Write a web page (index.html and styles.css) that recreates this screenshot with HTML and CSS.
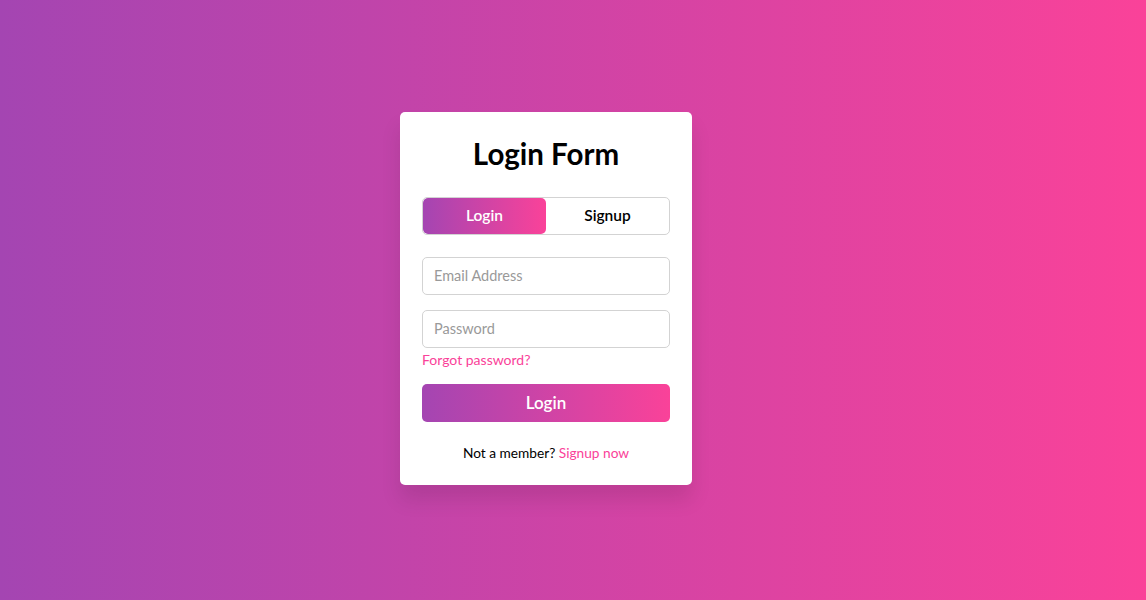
FILE: index.html
```html
<!DOCTYPE html>
<html lang="en">
<head>
    <meta charset="UTF-8">
    <meta name="viewport" content="width=device-width, initial-scale=1.0">
    <title>Login Form</title>
    <link rel="stylesheet" href="styles.css">
</head>
<body>
    <div class="wrapper">
        <h1 class="title">Login Form</h1>
        <div class="tabs">
            <button class="tab active">Login</button>
            <button class="tab">Signup</button>
        </div>
        <form class="form" onsubmit="return false">
            <input class="field" type="text" placeholder="Email Address">
            <input class="field pass" type="password" placeholder="Password">
            <a class="link forgot" href="#">Forgot password?</a>
            <button class="submit" type="submit">Login</button>
            <p class="signup">Not a member? <a class="link" href="#">Signup now</a></p>
        </form>
    </div>
</body>
</html>
```

FILE: styles.css
```css
* { margin: 0; padding: 0; box-sizing: border-box; }
html, body { height: 100%; }
body {
    font-family: "Lato", "Open Sans", sans-serif;
    background: linear-gradient(to right, #a445b2, #fa4299);
    display: flex;
    align-items: center;
    justify-content: center;
}
.wrapper {
    width: 292px;
    background: #fff;
    border-radius: 5px;
    padding: 24px 22px 24px;
    box-shadow: 0 15px 20px rgba(0, 0, 0, 0.1);
    margin: -3px 54px 0 0;
}
.title { font-size: 29.5px; font-weight: 700; text-align: center; line-height: 36px; color: #000; }
.tabs {
    display: flex;
    margin-top: 25px;
    height: 38px;
    border: 1px solid #d3d3d3;
    border-radius: 5px;
    overflow: hidden;
}
.tab {
    flex: 1;
    border: none;
    background: none;
    font-family: inherit;
    font-size: 15.5px;
    font-weight: 600;
    color: #000;
    padding-bottom: 2px;
}
.tab.active { background: linear-gradient(to right, #a445b2, #fa4299); color: #fff; border-radius: 5px; }
.form { display: flex; flex-direction: column; }
.field {
    height: 38px;
    margin-top: 22px;
    border: 1px solid #d3d3d3;
    border-radius: 5px;
    padding: 0 11px 2px;
    font-family: inherit;
    font-size: 14.5px;
    outline: none;
}
.field::placeholder { color: #999; }
.field.pass { margin-top: 15px; }
.link { color: #fa4299; text-decoration: none; }
.forgot { font-size: 14px; margin-top: 4px; margin-bottom: 1px; line-height: 16px; }
.submit {
    height: 38px;
    margin-top: 15px;
    border: none;
    border-radius: 5px;
    background: linear-gradient(to right, #a445b2, #fa4299);
    color: #fff;
    font-family: inherit;
    font-size: 17px;
    font-weight: 600;
    padding-bottom: 2px;
}
.signup { text-align: center; font-size: 13.7px; margin-top: 23px; line-height: 16px; color: #000; }
```
